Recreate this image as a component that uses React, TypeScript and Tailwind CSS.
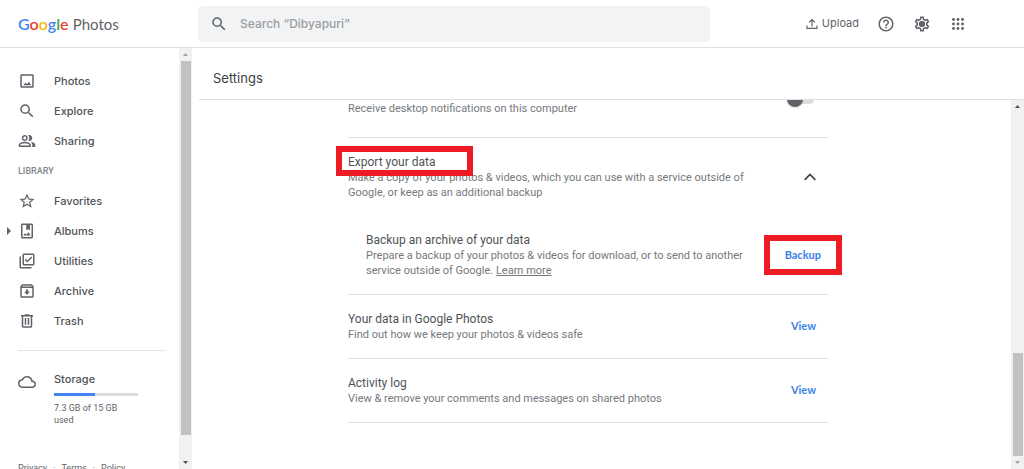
import type { ReactNode } from "react";
import {
  MdHelpOutline,
  MdOutlineArchive,
  MdOutlineCloud,
  MdOutlineLibraryAddCheck,
  MdOutlinePeopleAlt,
  MdOutlinePhotoAlbum,
  MdOutlineSettings,
  MdSearch,
  MdStarOutline,
} from "react-icons/md";

const PhotosIcon = () => (
  <svg viewBox="0 0 24 24" className="size-[18px]" fill="currentColor" aria-hidden="true">
    <path d="M19 5v14H5V5h14m0-2H5c-1.100 0-2 .9-2 2v14c0 1.100.9 2 2 2h14c1.100 0 2-.9 2-2V5c0-1.100-.9-2-2-2z" />
    <path d="M14.500 13l-2.300 3.100L10 14.200 7 17.500h10.500z" />
  </svg>
);

const TrashIcon = () => (
  <svg viewBox="0 0 24 24" className="size-[18px]" fill="currentColor" aria-hidden="true">
    <path d="M15 4V3H9v1H4v2h1v13c0 1.100.9 2 2 2h10c1.100 0 2-.9 2-2V6h1V4h-5zm2 15H7V6h10v13zM9 8h2v9H9zm4 0h2v9h-2z" />
  </svg>
);

const UploadIcon = () => (
  <svg viewBox="0 0 12 12" className="size-3" fill="none" stroke="currentColor" strokeWidth="1.200" aria-hidden="true">
    <path d="M6 8.500V1.500M3.200 4.200L6 1.500l2.800 2.700M1 7.500V10.400h10V7.500" />
  </svg>
);

const SettingsIcon = () => (
  <span className="relative block size-[18px]">
    <MdOutlineSettings className="size-[18px]" />
    <span className="absolute inset-[6px] rounded-full bg-current" />
  </span>
);

const AppsIcon = () => (
  <svg viewBox="0 0 12 12" className="size-3" fill="currentColor" aria-hidden="true">
    {[1.5, 6, 10.5].map((y) =>
      [1.5, 6, 10.5].map((x) => <circle key={`${x}-${y}`} cx={x} cy={y} r="1.450" />)
    )}
  </svg>
);

const ChevronUp = () => (
  <svg viewBox="0 0 12 8" className="h-2 w-3" fill="none" stroke="currentColor" strokeWidth="1.700" aria-hidden="true">
    <path d="M.7 6.800L6 1.500l5.300 5.300" />
  </svg>
);

const mainLinks = [
  { label: "Photos", icon: <PhotosIcon /> },
  { label: "Explore", icon: <MdSearch /> },
  { label: "Sharing", icon: <MdOutlinePeopleAlt /> },
];

const libraryLinks = [
  { label: "Favorites", icon: <MdStarOutline /> },
  { label: "Albums", icon: <MdOutlinePhotoAlbum />, expandable: true },
  { label: "Utilities", icon: <MdOutlineLibraryAddCheck /> },
  { label: "Archive", icon: <MdOutlineArchive /> },
  { label: "Trash", icon: <TrashIcon /> },
];

const NavLink = ({ label, icon, expandable }: { label: string; icon: ReactNode; expandable?: boolean }) => (
  <a href="#" className="flex h-[30px] items-center text-[11px] font-medium text-[#4f5357]">
    <span className="flex w-[18px] justify-center">
      {expandable && (
        <svg viewBox="0 0 4 8" className="h-2 w-1" fill="#5f6368" aria-hidden="true">
          <path d="M0 0l4 4-4 4z" />
        </svg>
      )}
    </span>
    <span className="mr-[18px] text-[18px] text-[#5f6368]">{icon}</span>
    {label}
  </a>
);

const Scrollbar = ({ children, upColor, downColor }: { children: ReactNode; upColor: string; downColor: string }) => (
  <div className="flex w-[13px] shrink-0 flex-col items-center bg-[#f1f1f1]" aria-hidden="true">
    <svg viewBox="0 0 13 13" className="size-[13px]" fill={upColor}>
      <path d="M4 8l2.500-3L9 8z" />
    </svg>
    <div className="flex w-[10px] flex-1 flex-col">{children}</div>
    <svg viewBox="0 0 13 13" className="size-[13px]" fill={downColor}>
      <path d="M4 5l2.500 3L9 5z" />
    </svg>
  </div>
);

const Header = () => (
  <header className="flex h-12 shrink-0 items-center justify-between border-b border-[#dfe0e1] pr-[60px]">
    <a href="#" className="w-[198px] shrink-0 pl-[18px] font-['Lato',sans-serif] text-base leading-6 text-[#5f6368]">
      <span className="font-semibold">
        <span className="text-[#4285f4]">G</span>
        <span className="text-[#ea4335]">o</span>
        <span className="text-[#fbbc04]">o</span>
        <span className="text-[#4285f4]">g</span>
        <span className="text-[#34a853]">l</span>
        <span className="text-[#ea4335]">e</span>
      </span>{" "}
      <span className="text-[15px]">Photos</span>
    </a>
    <label className="flex h-9 max-w-[512px] flex-1 items-center rounded-[5px] bg-[#f1f3f4] pl-3 text-[#5f6368]">
      <MdSearch className="mr-3 size-[18px]" />
      <input
        type="search"
        aria-label="Search"
        placeholder="Search “Dibyapuri”"
        className="min-w-0 flex-1 bg-transparent text-xs font-medium outline-none placeholder:text-[#9b9ea2]"
      />
    </label>
    <div className="ml-auto flex items-center text-[#5f6368]">
      <button type="button" className="mr-[18px] flex items-center gap-1 text-[11px]">
        <UploadIcon />
        Upload
      </button>
      <button type="button" aria-label="Help" className="mr-[18px]">
        <MdHelpOutline className="size-[18px]" />
      </button>
      <button type="button" aria-label="Settings" className="mr-[21px]">
        <SettingsIcon />
      </button>
      <button type="button" aria-label="Google apps">
        <AppsIcon />
      </button>
    </div>
  </header>
);

const Sidebar = () => (
  <aside className="flex w-48 shrink-0">
    <div className="min-w-0 flex-1 overflow-hidden pt-[18px]">
      <nav>
        {mainLinks.map((link) => (
          <NavLink key={link.label} {...link} />
        ))}
        <h2 className="pl-[18px] font-['Roboto',sans-serif] text-[9px] leading-[30px] font-medium text-[#80868b]">
          LIBRARY
        </h2>
        {libraryLinks.map((link) => (
          <NavLink key={link.label} {...link} />
        ))}
      </nav>
      <hr className="mt-[14px] mr-[14px] ml-[18px] border-[#e3e5e9]" />
      <div className="mt-5 flex pl-[18px]">
        <MdOutlineCloud className="mt-[2px] mr-[18px] size-[18px] text-[#5f6368]" />
        <div className="w-[84px] font-['Roboto',sans-serif] text-[9px] leading-3 text-[#5f6368]">
          <p className="font-['Inter',sans-serif] text-[11px] leading-4 font-medium text-[#4f5357]">Storage</p>
          <div className="mt-[6px] mb-[6px] h-[3px] bg-[#dadce0]">
            <div className="h-full w-[49%] bg-[#4285f4]" />
          </div>
          <p>7.3 GB of 15 GB used</p>
        </div>
      </div>
      <div className="mt-9 flex gap-[6px] pl-[18px] font-['Roboto',sans-serif] text-[9px] leading-3 text-[#5f6368]">
        <a href="#">Privacy</a>
        <span>·</span>
        <a href="#">Terms</a>
        <span>·</span>
        <a href="#">Policy</a>
      </div>
    </div>
    <Scrollbar upColor="#a3a3a3" downColor="#505050">
      <div className="flex-[374] bg-[#c1c1c1]" />
      <div className="flex-[21]" />
    </Scrollbar>
  </aside>
);

const Row = ({ title, children, action }: { title: string; children: ReactNode; action: string }) => (
  <section className="flex items-center justify-between border-b border-[#dfe0e2] py-4">
    <div>
      <h3 className="text-xs leading-4 text-[#4f5357]">{title}</h3>
      <p className="text-[11px] leading-[15px] text-[#75797d]">{children}</p>
    </div>
    <button type="button" className="mr-3 font-['Lato',sans-serif] text-[11px] font-bold text-[#3b82e8]">
      {action}
    </button>
  </section>
);

const Settings = () => (
  <main className="flex min-w-0 flex-1 flex-col">
    <h1 className="ml-[7px] h-[52px] shrink-0 border-b border-[#dfe0e1] pl-[14px] text-[13px] leading-[60px] text-[#3c4043]">
      Settings
    </h1>
    <div className="flex min-h-0 flex-1">
      <div className="min-w-0 flex-1 overflow-hidden pr-[27px] font-['Roboto',sans-serif]">
        <div className="mx-auto max-w-[480px]">
          <section className="flex justify-between border-b border-[#dfe0e2] pt-px pb-[21px]">
            <label htmlFor="desktop" className="text-[11px] leading-[15px] text-[#75797d]">
              Receive desktop notifications on this computer
            </label>
            <span className="relative -mt-[10px] mr-[14px] h-4 w-[27px]">
              <input
                id="desktop"
                type="checkbox"
                role="switch"
                className="absolute inset-x-0 top-1 h-[9px] appearance-none rounded-full bg-[#dadce0]"
              />
              <span className="pointer-events-none absolute top-0 left-0 size-4 rounded-full bg-[#5f6368] shadow" />
            </span>
          </section>

          <section className="border-b border-[#dfe0e2] py-4">
            <div className="flex items-center justify-between">
              <div className="max-w-[400px]">
                <h2 className="relative text-xs leading-4 text-[#4f5357]">
                  Export your data
                  <span className="absolute -top-2 -left-3 h-[30px] w-[137px] border-6 border-[#ed1c24]" />
                </h2>
                <p className="text-[11px] leading-[15px] text-[#75797d]">
                  Make a copy of your photos &amp; videos, which you can use with a service outside of Google, or keep
                  as an additional backup
                </p>
              </div>
              <button type="button" aria-label="Collapse" className="mr-3 text-[#3c4043]">
                <ChevronUp />
              </button>
            </div>
            <div className="mt-8 flex items-center justify-between pl-[18px]">
              <div className="max-w-[380px]">
                <h3 className="text-xs leading-4 text-[#4f5357]">Backup an archive of your data</h3>
                <p className="text-[11px] leading-[15px] text-[#75797d]">
                  Prepare a backup of your photos &amp; videos for download, or to send to another service outside of
                  Google.{" "}
                  <a href="#" className="underline">
                    Learn more
                  </a>
                </p>
              </div>
              <button
                type="button"
                className="relative mr-[7px] font-['Lato',sans-serif] text-[11px] font-bold text-[#3b82e8]"
              >
                Backup
                <span className="absolute -inset-x-[21px] -inset-y-3 border-6 border-[#ed1c24]" />
              </button>
            </div>
          </section>

          <Row title="Your data in Google Photos" action="View">
            Find out how we keep your photos &amp; videos safe
          </Row>
          <Row title="Activity log" action="View">
            View &amp; remove your comments and messages on shared photos
          </Row>
        </div>
      </div>
      <Scrollbar upColor="#505050" downColor="#a3a3a3">
        <div className="flex-[240]" />
        <div className="flex-[103] bg-[#c1c1c1]" />
      </Scrollbar>
    </div>
  </main>
);

const App = () => {
  return (
    <div className="flex h-screen flex-col overflow-hidden bg-white font-['Inter',sans-serif]">
      <Header />
      <div className="flex min-h-0 flex-1">
        <Sidebar />
        <Settings />
      </div>
    </div>
  );
};

export default App;
